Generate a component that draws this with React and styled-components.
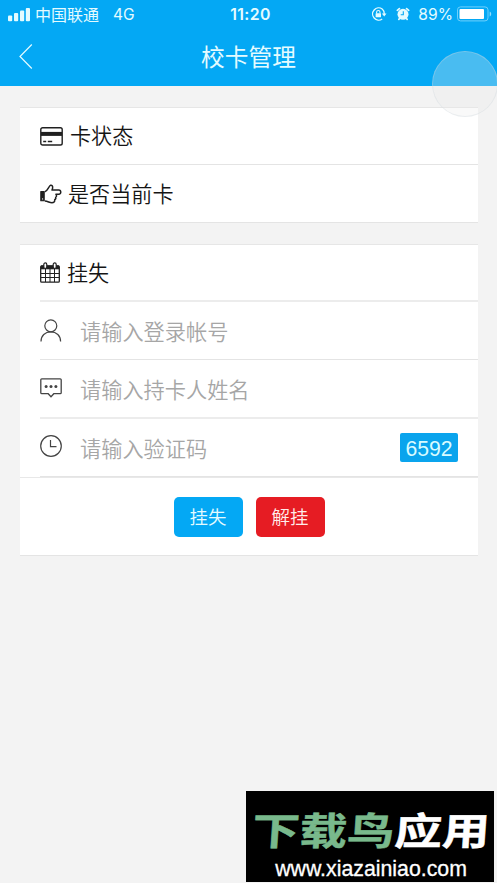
import React, { useState } from 'react';
import styled, { createGlobalStyle } from 'styled-components';

const GlobalStyles = createGlobalStyle`
  * {
    box-sizing: border-box;
  }

  body {
    margin: 0;
    background-color: #f3f3f3;
    font-family: 'Liberation Sans', 'Noto Sans CJK SC', sans-serif;
    overflow: hidden;
  }
`;

const Screen = styled.div`
  position: relative;
  width: 497px;
  height: 883px;
  overflow: hidden;
`;

const Header = styled.header`
  height: 86px;
  background-color: #04a8f4;
  color: #e4fbff;
`;

const StatusBar = styled.div`
  display: grid;
  grid-template-columns: 1fr auto 1fr;
  align-items: center;
  height: 28px;
  padding: 0 5px 0 8px;
  font-family: Inter, 'Noto Sans CJK SC', sans-serif;
  font-size: 16px;
  line-height: 28px;
`;

const StatusLeft = styled.div`
  display: flex;
  align-items: center;
`;

const StatusRight = styled.div`
  display: flex;
  align-items: center;
  justify-content: flex-end;
`;

const Carrier = styled.span`
  margin-left: 5px;
`;

const Network = styled.span`
  margin-left: 14px;
  font-size: 15.5px;
`;

const Clock = styled.span`
  padding: 1px 0 0 1px;
  font-weight: 600;
  font-size: 15.8px;
  letter-spacing: 0.4px;
`;

const AlarmCell = styled.span`
  display: flex;
  margin: 0 8px 0 9px;
`;

const Percent = styled.span`
  margin-right: 4px;
  font-size: 15.6px;
`;

const NavBar = styled.div`
  display: grid;
  grid-template-columns: 1fr auto 1fr;
  align-items: center;
  height: 58px;
  padding: 0 19px;
`;

const BackButton = styled.button`
  display: flex;
  width: 14px;
  padding: 0;
  border: none;
  background: none;
  color: inherit;
  cursor: pointer;
`;

const Title = styled.h1`
  margin: 0;
  padding-top: 2px;
  font-size: 23.7px;
  line-height: 56px;
  font-weight: 400;
`;

const Content = styled.main`
  display: flex;
  flex-direction: column;
  gap: 21px;
  padding: 21px 19px 0 20px;
`;

const Card = styled.section`
  background-color: #fff;
  border-top: 1px solid #e6e6e6;
  border-bottom: 1px solid #e4e4e4;
`;

const Row = styled.div`
  display: flex;
  align-items: center;
  height: ${(props) => props.$height}px;
  margin-left: 20px;
  padding-right: 20px;
  border-bottom: ${(props) => props.$line || 0}px solid ${(props) => (props.$line === 2 ? '#ececec' : '#e4e4e4')};
`;

const Label = styled.span`
  margin-left: ${(props) => props.$gap}px;
  padding-top: 2px;
  color: #151515;
  font-size: 21.1px;
  font-weight: 350;
  line-height: 30px;
`;

const IconCell = styled.span`
  display: flex;
  flex: none;
  width: 40px;
  padding-bottom: ${(props) => props.$lift}px;
  color: #444;
`;

const Input = styled.input`
  flex: 1;
  min-width: 0;
  height: 40px;
  padding: 4px 0 0;
  border: none;
  outline: none;
  background: none;
  color: #333;
  font-family: inherit;
  font-size: 21.2px;
  font-weight: 350;

  &::placeholder {
    color: #a6a6a6;
    opacity: 1;
  }
`;

const Captcha = styled.span`
  width: 58px;
  height: 29px;
  border-radius: 2px;
  background-color: #0aa4ed;
  color: #d8fbff;
  font-size: 21.2px;
  line-height: 31px;
  text-align: center;
`;

const Actions = styled.div`
  display: flex;
  justify-content: center;
  gap: 13px;
  height: 78px;
  padding-top: 19px;
  border-top: 1px solid #e8e8e8;
`;

const Button = styled.button`
  width: 69px;
  height: 40px;
  padding: 1px 0 0;
  border: none;
  border-radius: 5px;
  background-color: ${(props) => (props.$danger ? '#e61c23' : '#04a8f4')};
  color: ${(props) => (props.$danger ? '#ffecea' : '#e4fbff')};
  font-family: inherit;
  font-size: 18.5px;
  font-weight: 350;
  line-height: 39px;
  cursor: pointer;
`;

const AssistiveTouch = styled.div`
  position: absolute;
  top: 51px;
  left: 432px;
  width: 66px;
  height: 66px;
  border: 1px solid rgba(205, 215, 220, 0.35);
  border-radius: 50%;
  background-color: rgba(236, 236, 236, 0.3);
`;

const Watermark = styled.div`
  position: absolute;
  left: 246px;
  top: 791px;
  width: 248px;
  height: 91px;
  padding-top: 13px;
  background-color: #000;
  color: #fff;
  text-align: center;
`;

const Brand = styled.div`
  height: 50px;
  padding-left: 2px;
  font-family: 'Noto Sans CJK SC', sans-serif;
  font-size: 47.5px;
  font-weight: 700;
  line-height: 50px;
  white-space: nowrap;
  transform: skewX(-4deg) scaleY(0.8);
  -webkit-text-stroke: 0.6px currentColor;
`;

const Green = styled.span`
  color: #79b98c;
`;

const Site = styled.div`
  padding-left: 2px;
  font-size: 21.3px;
  line-height: 30px;
  -webkit-text-stroke: 0.3px #fff;
`;

const SignalIcon = () => (
  <svg width="22" height="16" viewBox="0 0 22 16" fill="currentColor">
    <rect x="0" y="8.4" width="4.2" height="5.8" rx="1" />
    <rect x="6" y="6" width="4.2" height="8.2" rx="1" />
    <rect x="12" y="3.6" width="4.2" height="10.6" rx="1" />
    <rect x="17.8" y="1" width="4.2" height="13.2" rx="1" />
  </svg>
);

const LockIcon = () => (
  <svg width="16" height="16" viewBox="0 0 16 16" fill="none" stroke="currentColor" strokeWidth="1.3">
    <path d="M11.2 2A6.1 6.1 0 1 0 11.2 12M11.2 2A6.1 6.1 0 0 1 13.2 7" />
    <path d="M10.9 6.5h4.6l-2.3 3z" fill="currentColor" stroke="none" />
    <path d="M5.6 6.5V5.2a1.7 1.7 0 0 1 3.4 0v1.3" strokeWidth="1.1" />
    <rect x="4.6" y="6.3" width="5.4" height="3.9" rx="0.5" fill="currentColor" stroke="none" />
  </svg>
);

const AlarmIcon = () => (
  <svg width="14" height="16" viewBox="0 0 14 16" fill="none" stroke="currentColor">
    <circle cx="7" cy="7.3" r="5.5" fill="currentColor" stroke="none" />
    <path d="M1.3 3.3 3.4 1.6M12.7 3.3 10.6 1.6M3.6 11.3 2.8 12.4M10.4 11.3 11.2 12.4" strokeWidth="1.7" strokeLinecap="round" />
    <path d="M7.3 4.2v3.5H4.7" stroke="#04a8f4" strokeWidth="1.1" />
  </svg>
);

const BatteryIcon = () => (
  <svg width="35" height="18" viewBox="0 0 35 18">
    <rect x="0.5" y="0.9" width="30.5" height="14" rx="3" fill="none" stroke="#6fd0fc" />
    <rect x="2.5" y="3" width="24.5" height="10" rx="1" fill="#fff" />
    <path d="M32.7 5.5c2 .7 2 4.3 0 5z" fill="#8eddff" />
  </svg>
);

const BackIcon = () => (
  <svg width="14" height="26" viewBox="0 0 14 26" fill="none" stroke="currentColor" strokeWidth="1.2">
    <path d="M12.8.5 1 12.5l11.8 12" />
  </svg>
);

const CardIcon = () => (
  <svg width="23" height="19" viewBox="0 0 23 19" fill="none" stroke="#202020">
    <rect x="0.8" y="0.8" width="21.4" height="17.2" rx="1.8" strokeWidth="1.4" />
    <path d="M1 6.9h21" strokeWidth="4" />
    <path d="M3.2 14.5h3M7.8 14.5h4.4" strokeWidth="1.4" />
  </svg>
);

const HandIcon = () => (
  <svg width="22" height="20" viewBox="0 0 22 20" fill="none" stroke="#202020" strokeWidth="1.5" strokeLinejoin="round">
    <path d="M.8 7.6h3.4v9.2H.8z" fill="#202020" strokeWidth="1.1" />
    <path d="M4.8 7.7c3-.6 4-5.9 5.8-6.4 2.1-.5 2.7 2 1.4 4.7h6.8c2.6 0 2.6 4.3 0 4.3h-2.9c1 1.1.7 2.5-.3 3 .5 1.2 0 2-.9 2.4.2 2.1-.8 3-2.8 3-2.7 0-3.9-1.6-7.1-1.6" />
    <circle cx="2.6" cy="14.9" r="0.6" fill="#fff" stroke="none" />
  </svg>
);

const CalendarIcon = () => (
  <svg width="20" height="21" viewBox="0 0 20 21" fill="none" stroke="#202020">
    <rect x="0.7" y="3.8" width="18.6" height="16.4" rx="1" strokeWidth="1.3" />
    <path d="M1 5.4h18" strokeWidth="3.8" />
    <path d="M5.5 7v13M10 7v13M14.5 7v13M1 11.5h18M1 15.5h18" strokeWidth="1" />
    <rect x="3.8" y="0.9" width="3" height="5.5" rx="1.5" fill="#fff" strokeWidth="1.2" />
    <rect x="13.2" y="0.9" width="3" height="5.5" rx="1.5" fill="#fff" strokeWidth="1.2" />
  </svg>
);

const UserIcon = () => (
  <svg width="22" height="23" viewBox="0 0 22 23" fill="none" stroke="currentColor" strokeWidth="1.2">
    <circle cx="10.8" cy="6.8" r="6" />
    <path d="M1 22.4c0-5.7 4.1-9.6 9.8-9.6s9.8 3.9 9.8 9.6" />
  </svg>
);

const MessageIcon = () => (
  <svg width="22" height="20" viewBox="0 0 22 20" fill="none" stroke="currentColor" strokeWidth="1.3">
    <path d="M1.8.8h18.4q1 0 1 1v12.9q0 1-1 1h-6.4L11 18.7l-2.8-3H1.8q-1 0-1-1V1.8q0-1 1-1z" />
    <g fill="currentColor" stroke="none">
      <circle cx="6.1" cy="8.4" r="1.5" />
      <circle cx="11" cy="8.4" r="1.5" />
      <circle cx="15.9" cy="8.4" r="1.5" />
    </g>
  </svg>
);

const ClockIcon = () => (
  <svg width="22" height="22" viewBox="0 0 22 22" fill="none" stroke="currentColor" strokeWidth="1.2">
    <circle cx="11" cy="11" r="10.3" />
    <path d="M10.5 5v6.6h6" />
  </svg>
);

const fields = [
  { name: 'account', placeholder: '请输入登录帐号', icon: <UserIcon />, height: 58, line: 1, lift: 1 },
  { name: 'holder', placeholder: '请输入持卡人姓名', icon: <MessageIcon />, height: 59, line: 2, lift: 1 },
  { name: 'code', placeholder: '请输入验证码', icon: <ClockIcon />, height: 58, line: 1, lift: 3 },
];

const App = () => {
  const [values, setValues] = useState({ account: '', holder: '', code: '' });

  const handleChange = (e) => {
    setValues({ ...values, [e.target.name]: e.target.value });
  };

  return (
    <Screen>
      <GlobalStyles />
      <Header>
        <StatusBar>
          <StatusLeft>
            <SignalIcon />
            <Carrier>中国联通</Carrier>
            <Network>4G</Network>
          </StatusLeft>
          <Clock>11:20</Clock>
          <StatusRight>
            <LockIcon />
            <AlarmCell><AlarmIcon /></AlarmCell>
            <Percent>89%</Percent>
            <BatteryIcon />
          </StatusRight>
        </StatusBar>
        <NavBar>
          <BackButton aria-label="返回"><BackIcon /></BackButton>
          <Title>校卡管理</Title>
        </NavBar>
      </Header>

      <Content>
        <Card>
          <Row $height={57} $line={1}>
            <CardIcon />
            <Label $gap={7}>卡状态</Label>
          </Row>
          <Row $height={57}>
            <HandIcon />
            <Label $gap={6}>是否当前卡</Label>
          </Row>
        </Card>

        <Card>
          <Row $height={57} $line={2}>
            <CalendarIcon />
            <Label $gap={7}>挂失</Label>
          </Row>
          {fields.map((field) => (
            <Row key={field.name} $height={field.height} $line={field.line}>
              <IconCell $lift={field.lift}>{field.icon}</IconCell>
              <Input
                name={field.name}
                placeholder={field.placeholder}
                value={values[field.name]}
                onChange={handleChange}
              />
              {field.name === 'code' && <Captcha>6592</Captcha>}
            </Row>
          ))}
          <Actions>
            <Button>挂失</Button>
            <Button $danger>解挂</Button>
          </Actions>
        </Card>
      </Content>

      <AssistiveTouch />
      <Watermark>
        <Brand><Green>下载鸟</Green>应用</Brand>
        <Site>www.xiazainiao.com</Site>
      </Watermark>
    </Screen>
  );
};

export default App;
